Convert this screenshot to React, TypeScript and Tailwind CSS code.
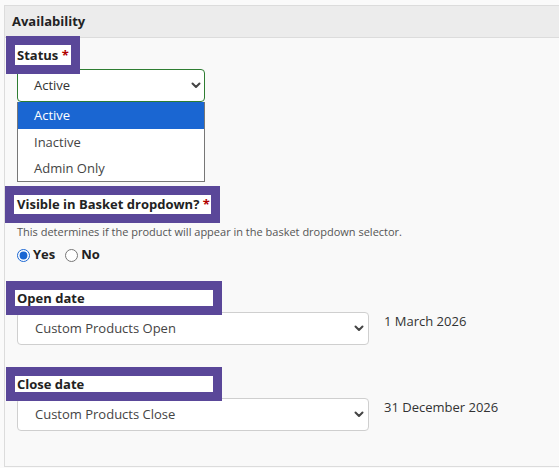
import React from 'react';

const font = { fontFamily: '"Open Sans", "Liberation Sans", sans-serif' };

function Chevron() {
  return (
    <svg width="10" height="7" viewBox="0 0 10 7" className="shrink-0">
      <path d="M1.5 1.5 L5 5 L8.5 1.5" fill="none" stroke="#444" strokeWidth="2" strokeLinecap="round" strokeLinejoin="round" />
    </svg>
  );
}

function Marker({ children, className = '' }: { children: React.ReactNode; className?: string }) {
  // purple annotation frame round a label
  return (
    <div className={`relative bg-white outline-9 outline-[#5a4799] text-[13px] font-bold text-[#222] ${className}`}>
      {children}
    </div>
  );
}

function DateSelect({ value, date }: { value: string; date: string }) {
  return (
    <div className="flex items-start mt-[6px]">
      <div className="w-[352px] h-[33px] flex items-center justify-between pl-[17px] pr-[4px] bg-white border border-[#cfcfcf] rounded-[4px] text-[13px] text-[#444]">
        <span className="pt-[1px]">{value}</span>
        <Chevron />
      </div>
      <div className="ml-[15px] text-[13px] text-[#333] leading-[18px]">{date}</div>
    </div>
  );
}

export default function App() {
  return (
    <div className="w-[559px] h-[468px] bg-[#fafafa] pt-[5px] pl-[4px] overflow-hidden" style={font}>
      <div className="h-[462px] bg-[#f9f9f9] border border-r-0 border-[#dcdcdc]">
        <div className="h-[32px] bg-[#ececec] border-b border-[#dcdcdc] flex items-center pl-[7px] text-[13px] font-bold text-[#222]">
          Availability
        </div>

        <div className="pl-[12px]">
          {/* Status */}
          <Marker className="mt-[7px] w-fit h-[20px] leading-[20px] px-[2px] -ml-[2px]">
            Status <span className="text-[#b00000]">*</span>
          </Marker>
          <div className="mt-[4px] w-[188px]">
            <div className="h-[33px] flex items-center justify-between pl-[16px] pr-[3px] bg-white border border-[#2e7d32] rounded-[4px] text-[13px] text-[#333]">
              <span className="pt-[1px]">Active</span>
              <Chevron />
            </div>
            <div className="border border-[#777] border-t-0 bg-white text-[13px]">
              <div className="h-[27px] flex items-center pl-[16px] pt-[1px] bg-[#1a66d2] text-white">Active</div>
              <div className="h-[26px] flex items-center pl-[16px] pt-[1px] text-[#444]">Inactive</div>
              <div className="h-[26px] flex items-center pl-[16px] pt-[1px] text-[#444]">Admin Only</div>
            </div>
          </div>

          {/* Visible in basket */}
          <Marker className="mt-[13px] w-[197px] h-[19px] leading-[19px] pl-[3px] -ml-[3px]">
            Visible in Basket dropdown? <span className="text-[#b00000]">*</span>
          </Marker>
          <div className="mt-[10px] text-[11px] leading-[16px] text-[#555]">
            This determines if the product will appear in the basket dropdown selector.
          </div>
          <div className="mt-[5px] h-[20px] flex items-center text-[13px] font-bold text-[#222]">
            <input type="radio" checked readOnly className="m-0 w-[13px] h-[13px] accent-[#1a66d2]" />
            <span className="ml-[3px]">Yes</span>
            <input type="radio" readOnly className="m-0 ml-[10px] w-[13px] h-[13px]" />
            <span className="ml-[3px]">No</span>
          </div>

          {/* Open date */}
          <Marker className="mt-[25px] w-[198px] h-[16px] leading-[16px] pl-[2px] -ml-[2px]">
            Open date
          </Marker>
          <DateSelect value="Custom Products Open" date="1 March 2026" />

          {/* Close date */}
          <Marker className="mt-[31px] w-[198px] h-[16px] leading-[16px] pl-[2px] -ml-[2px]">
            Close date
          </Marker>
          <DateSelect value="Custom Products Close" date="31 December 2026" />
        </div>
      </div>
    </div>
  );
}
